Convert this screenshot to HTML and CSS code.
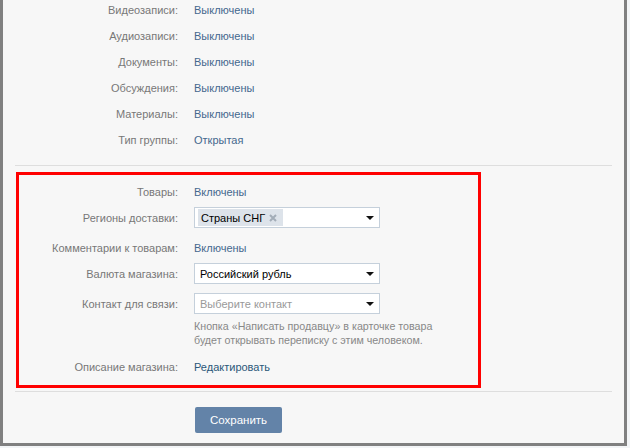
FILE: index.html
```html
<!DOCTYPE html>
<html lang="ru">
<head>
<meta charset="utf-8">
<title>Настройки сообщества</title>
<link rel="stylesheet" href="styles.css">
</head>
<body>
<div class="frame">
  <section class="group">
    <div class="row"><div class="label">Видеозаписи:</div><div class="value">Выключены</div></div>
    <div class="row"><div class="label">Аудиозаписи:</div><div class="value">Выключены</div></div>
    <div class="row"><div class="label">Документы:</div><div class="value">Выключены</div></div>
    <div class="row"><div class="label">Обсуждения:</div><div class="value">Выключены</div></div>
    <div class="row"><div class="label">Материалы:</div><div class="value">Выключены</div></div>
    <div class="row"><div class="label">Тип группы:</div><div class="value">Открытая</div></div>
  </section>
  <hr class="sep sep-top">
  <section class="shop">
    <div class="row"><div class="label">Товары:</div><div class="value">Включены</div></div>
    <div class="row row-select gap-s"><div class="label">Регионы доставки:</div>
      <div class="select">
        <span class="token">Страны СНГ
          <svg class="token-x" width="8" height="8" viewBox="0 0 8 8"><path d="M1 1 L7 7 M7 1 L1 7" stroke="#a3adb8" stroke-width="2"/></svg>
        </span>
        <span class="arrow"></span>
      </div>
    </div>
    <div class="row gap-l"><div class="label">Комментарии к товарам:</div><div class="value">Включены</div></div>
    <div class="row row-select gap-s"><div class="label">Валюта магазина:</div>
      <div class="select"><span class="select-text">Российский рубль</span><span class="arrow"></span></div>
    </div>
    <div class="row row-select gap-m"><div class="label">Контакт для связи:</div>
      <div class="select"><span class="select-text placeholder">Выберите контакт</span><span class="arrow"></span></div>
    </div>
    <div class="row hint-row"><div class="label"></div>
      <div class="hint">Кнопка «Написать продавцу» в карточке товара<br>будет открывать переписку с этим человеком.</div>
    </div>
    <div class="row gap-l"><div class="label">Описание магазина:</div><div class="value"><a class="link" href="#">Редактировать</a></div></div>
  </section>
  <hr class="sep sep-bottom">
  <div class="actions"><button class="btn">Сохранить</button></div>
</div>
</body>
</html>
```

FILE: styles.css
```css
html, body {
  margin: 0;
  padding: 0;
  background: #f3f5f7;
}
body {
  font-family: "Liberation Sans", Arial, sans-serif;
  font-size: 11px;
  line-height: 16px;
  color: #333;
}
.frame {
  width: 627px;
  box-sizing: border-box;
  background: #f7f7f7;
  border-left: 3px solid #808080;
  border-right: 3px solid #808080;
  border-bottom: 3px solid #808080;
  padding-bottom: 10px;
}
.group {
  padding-top: 2px;
  display: flex;
  flex-direction: column;
  gap: 10px;
}
.row {
  display: grid;
  grid-template-columns: 175px 1fr;
  column-gap: 16px;
  align-items: center;
}
.label {
  text-align: right;
  color: #777;
  white-space: nowrap;
}
.value {
  color: #45688e;
}
.sep {
  border: 0;
  height: 1px;
  background: #dedede;
  margin: 0 12px;
}
.sep-top { margin-top: 17px; }
.sep-bottom { margin-top: 3px; }
.shop {
  margin: 6px 0 0 13px;
  width: 465px;
  box-sizing: border-box;
  border: 3px solid #ff0000;
  padding: 9px 0 10px;
}
.shop .row { grid-template-columns: 159px 1fr; }
.gap-s { margin-top: 7px; }
.gap-m { margin-top: 9px; }
.gap-l { margin-top: 12px; }
.hint-row { margin-top: 5px; }
.select {
  width: 186px;
  height: 21px;
  box-sizing: border-box;
  background: #fff;
  border: 1px solid #c5d0db;
  display: flex;
  align-items: center;
}
.select-text {
  padding-left: 5px;
  color: #000;
}
.select-text.placeholder { color: #999; }
.token {
  margin-left: 3px;
  width: 85px;
  height: 17px;
  box-sizing: border-box;
  display: flex;
  align-items: center;
  justify-content: space-between;
  padding: 0 6px 0 3px;
  background: #dde3ea;
  color: #000;
}
.token-x { display: block; }
.arrow {
  margin-left: auto;
  margin-right: 5px;
  width: 0;
  height: 0;
  border-left: 4px solid transparent;
  border-right: 4px solid transparent;
  border-top: 4px solid #111;
}
.hint {
  color: #888;
  font-size: 10.7px;
  line-height: 14px;
}
.link {
  color: #2b587a;
  text-decoration: none;
}
.actions {
  margin-top: 15px;
  padding-left: 192px;
}
.btn {
  width: 87px;
  height: 26px;
  border: 0;
  border-radius: 2px;
  background: #6383a8;
  color: #fff;
  font-family: "Liberation Sans", Arial, sans-serif;
  font-size: 11.5px;
  padding: 0;
  display: block;
}
```
